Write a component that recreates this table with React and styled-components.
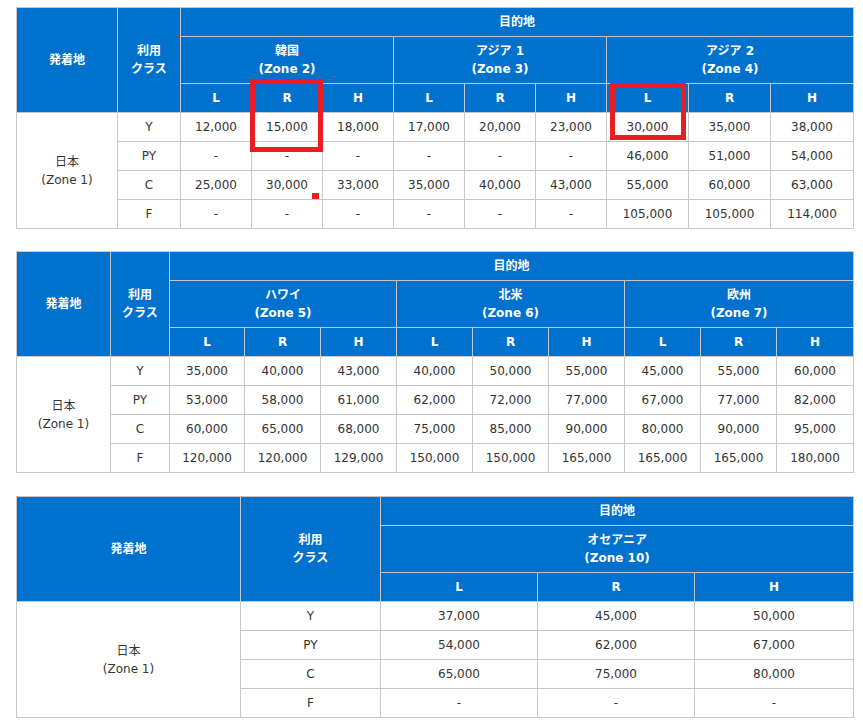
import React from "react";
import styled, { createGlobalStyle } from "styled-components";

const GlobalStyle = createGlobalStyle`
  html, body {
    margin: 0;
    padding: 0;
    background: #fff;
  }
  body {
    font-family: "DejaVu Sans", "Noto Sans CJK JP", sans-serif;
    color: #333;
  }
`;

const Page = styled.div`
  position: relative;
  width: 837px;
  padding: 7px 10px 0 16px;
  display: flex;
  flex-direction: column;
  gap: 22px;
`;

const Table = styled.table`
  width: 837px;
  table-layout: fixed;
  border-collapse: collapse;
  font-size: 12px;
  line-height: 18px;
  margin-top: ${(p) => p.$shift || 0}px;
`;

const Th = styled.th`
  background: #0071cd;
  color: #fff;
  font-weight: bold;
  text-align: center;
  vertical-align: middle;
  border: 1px solid #c8c8c8;
  padding: 0 4px;
  height: ${(p) => p.$h || 29}px;
  box-sizing: border-box;
`;

const Td = styled.td`
  background: #fff;
  color: #333;
  text-align: center;
  vertical-align: middle;
  border: 1px solid #c8c8c8;
  padding: 0 4px;
  height: 29px;
  box-sizing: border-box;
`;

const Mark = styled.div`
  position: absolute;
  border: 5px solid #ec1c24;
  box-sizing: border-box;
  pointer-events: none;
`;

const Dot = styled.div`
  position: absolute;
  width: 7px;
  height: 6px;
  background: #ec1c24;
`;

const classes = ["Y", "PY", "C", "F"];

function FareTable({ widths, zones, rows, shift }) {
  const cols = zones.length * 3;
  return (
    <Table $shift={shift}>
      <colgroup>
        {widths.map((w, i) => (
          <col key={i} style={{ width: w }} />
        ))}
      </colgroup>
      <thead>
        <tr>
          <Th rowSpan={3}>発着地</Th>
          <Th rowSpan={3}>
            利用
            <br />
            クラス
          </Th>
          <Th colSpan={cols}>目的地</Th>
        </tr>
        <tr>
          {zones.map((z) => (
            <Th key={z[1]} colSpan={3} $h={47}>
              {z[0]}
              <br />({z[1]})
            </Th>
          ))}
        </tr>
        <tr>
          {zones.map((z) =>
            ["L", "R", "H"].map((s) => <Th key={z[1] + s}>{s}</Th>)
          )}
        </tr>
      </thead>
      <tbody>
        {rows.map((r, i) => (
          <tr key={i}>
            {i === 0 && (
              <Td rowSpan={4}>
                日本
                <br />
                (Zone 1)
              </Td>
            )}
            <Td>{classes[i]}</Td>
            {r.map((v, j) => (
              <Td key={j}>{v}</Td>
            ))}
          </tr>
        ))}
      </tbody>
    </Table>
  );
}

const t1 = {
  widths: [101, 63, 71, 71, 71, 71, 71, 71, 82, 82, 83],
  zones: [
    ["韓国", "Zone 2"],
    ["アジア 1", "Zone 3"],
    ["アジア 2", "Zone 4"],
  ],
  rows: [
    ["12,000", "15,000", "18,000", "17,000", "20,000", "23,000", "30,000", "35,000", "38,000"],
    ["-", "-", "-", "-", "-", "-", "46,000", "51,000", "54,000"],
    ["25,000", "30,000", "33,000", "35,000", "40,000", "43,000", "55,000", "60,000", "63,000"],
    ["-", "-", "-", "-", "-", "-", "105,000", "105,000", "114,000"],
  ],
};

const t2 = {
  widths: [94, 59, 75, 76, 76, 76, 76, 76, 76, 76, 77],
  zones: [
    ["ハワイ", "Zone 5"],
    ["北米", "Zone 6"],
    ["欧州", "Zone 7"],
  ],
  rows: [
    ["35,000", "40,000", "43,000", "40,000", "50,000", "55,000", "45,000", "55,000", "60,000"],
    ["53,000", "58,000", "61,000", "62,000", "72,000", "77,000", "67,000", "77,000", "82,000"],
    ["60,000", "65,000", "68,000", "75,000", "85,000", "90,000", "80,000", "90,000", "95,000"],
    ["120,000", "120,000", "129,000", "150,000", "150,000", "165,000", "165,000", "165,000", "180,000"],
  ],
};

const t3 = {
  widths: [224, 140, 157, 157, 159],
  zones: [["オセアニア", "Zone 10"]],
  rows: [
    ["37,000", "45,000", "50,000"],
    ["54,000", "62,000", "67,000"],
    ["65,000", "75,000", "80,000"],
    ["-", "-", "-"],
  ],
  shift: 1,
};

export default function App() {
  return (
    <>
      <GlobalStyle />
      <Page>
        <FareTable {...t1} />
        <FareTable {...t2} />
        <FareTable {...t3} />
        <Mark style={{ left: 250, top: 79, width: 73, height: 73 }} />
        <Mark style={{ left: 610, top: 83, width: 76, height: 57 }} />
        <Dot style={{ left: 312, top: 193 }} />
      </Page>
    </>
  );
}
